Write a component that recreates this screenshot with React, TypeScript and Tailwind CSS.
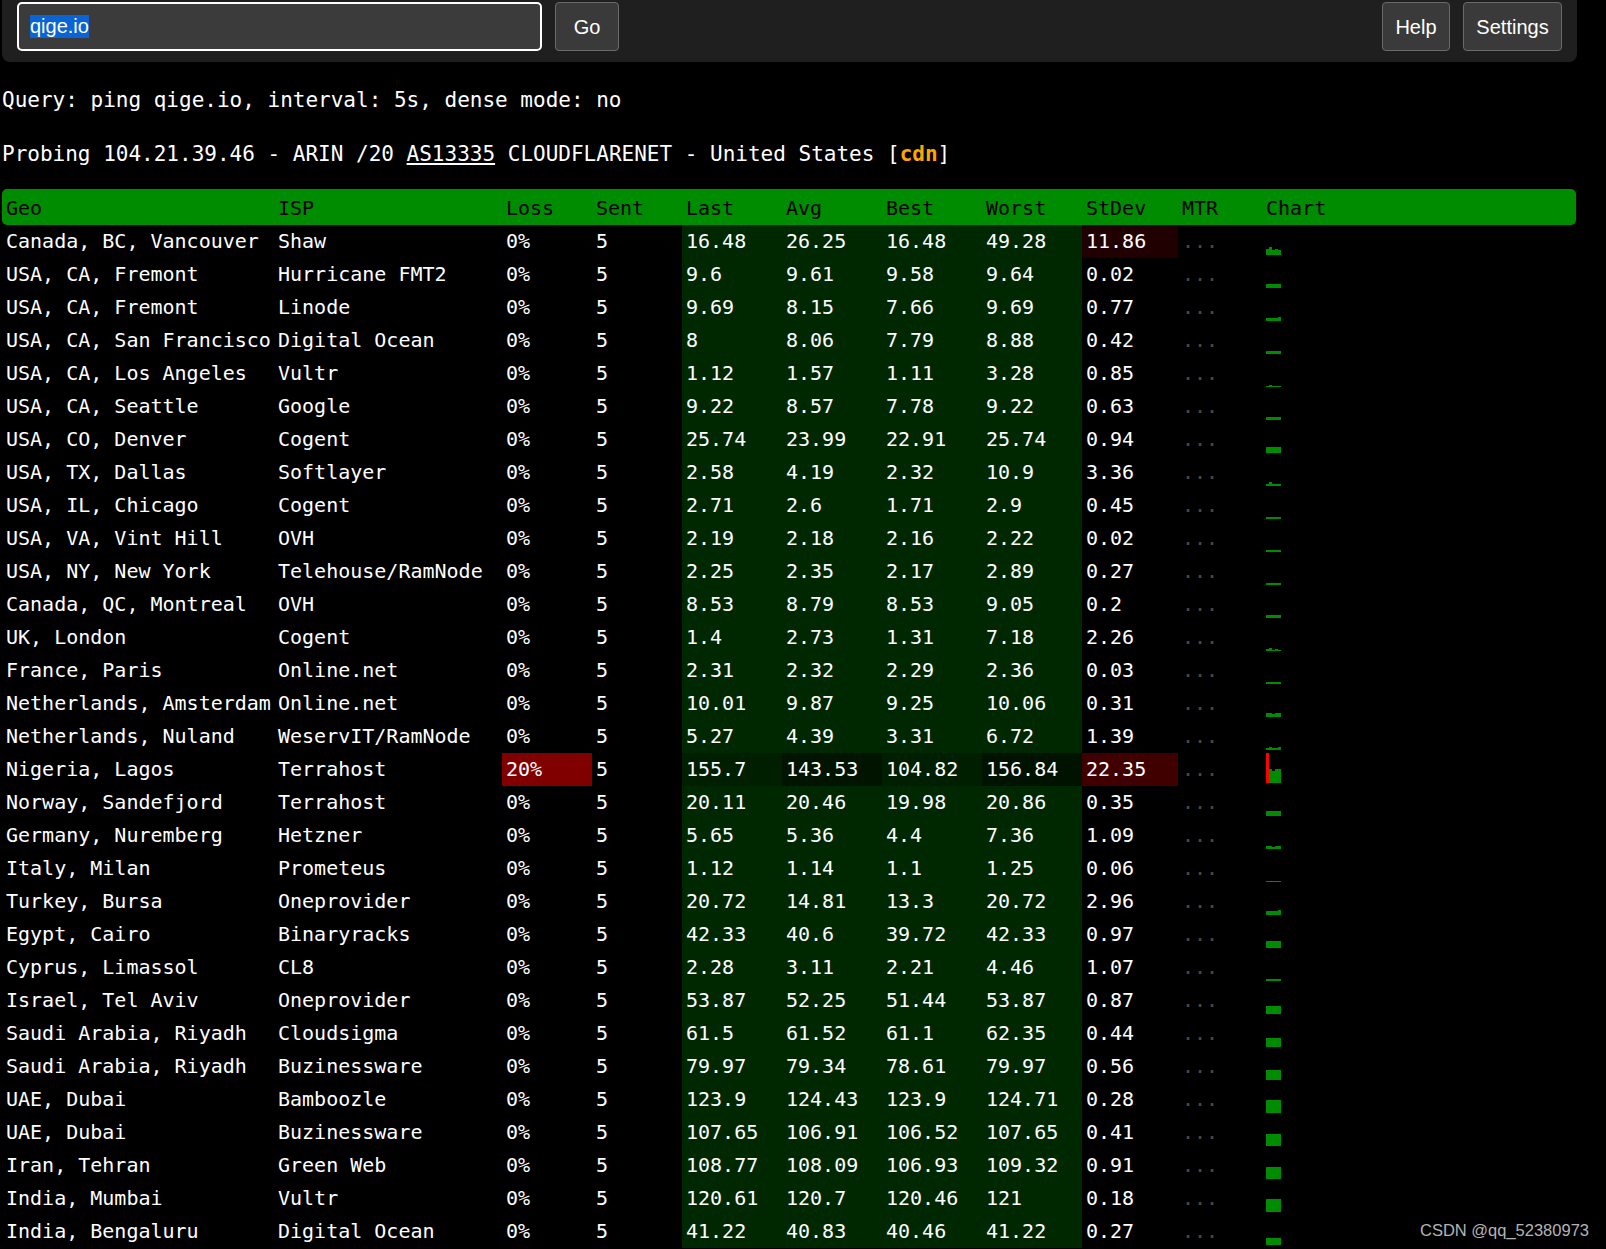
type Row = {
  geo: string
  isp: string
  loss: string
  last: number
  avg: number
  best: number
  worst: number
  stdev: string
  lost?: boolean
}

const rows: Row[] = [
  { geo: "Canada, BC, Vancouver", isp: "Shaw", loss: "0%", last: 16.48, avg: 26.25, best: 16.48, worst: 49.28, stdev: "11.86" },
  { geo: "USA, CA, Fremont", isp: "Hurricane FMT2", loss: "0%", last: 9.6, avg: 9.61, best: 9.58, worst: 9.64, stdev: "0.02" },
  { geo: "USA, CA, Fremont", isp: "Linode", loss: "0%", last: 9.69, avg: 8.15, best: 7.66, worst: 9.69, stdev: "0.77" },
  { geo: "USA, CA, San Francisco", isp: "Digital Ocean", loss: "0%", last: 8, avg: 8.06, best: 7.79, worst: 8.88, stdev: "0.42" },
  { geo: "USA, CA, Los Angeles", isp: "Vultr", loss: "0%", last: 1.12, avg: 1.57, best: 1.11, worst: 3.28, stdev: "0.85" },
  { geo: "USA, CA, Seattle", isp: "Google", loss: "0%", last: 9.22, avg: 8.57, best: 7.78, worst: 9.22, stdev: "0.63" },
  { geo: "USA, CO, Denver", isp: "Cogent", loss: "0%", last: 25.74, avg: 23.99, best: 22.91, worst: 25.74, stdev: "0.94" },
  { geo: "USA, TX, Dallas", isp: "Softlayer", loss: "0%", last: 2.58, avg: 4.19, best: 2.32, worst: 10.9, stdev: "3.36" },
  { geo: "USA, IL, Chicago", isp: "Cogent", loss: "0%", last: 2.71, avg: 2.6, best: 1.71, worst: 2.9, stdev: "0.45" },
  { geo: "USA, VA, Vint Hill", isp: "OVH", loss: "0%", last: 2.19, avg: 2.18, best: 2.16, worst: 2.22, stdev: "0.02" },
  { geo: "USA, NY, New York", isp: "Telehouse/RamNode", loss: "0%", last: 2.25, avg: 2.35, best: 2.17, worst: 2.89, stdev: "0.27" },
  { geo: "Canada, QC, Montreal", isp: "OVH", loss: "0%", last: 8.53, avg: 8.79, best: 8.53, worst: 9.05, stdev: "0.2" },
  { geo: "UK, London", isp: "Cogent", loss: "0%", last: 1.4, avg: 2.73, best: 1.31, worst: 7.18, stdev: "2.26" },
  { geo: "France, Paris", isp: "Online.net", loss: "0%", last: 2.31, avg: 2.32, best: 2.29, worst: 2.36, stdev: "0.03" },
  { geo: "Netherlands, Amsterdam", isp: "Online.net", loss: "0%", last: 10.01, avg: 9.87, best: 9.25, worst: 10.06, stdev: "0.31" },
  { geo: "Netherlands, Nuland", isp: "WeservIT/RamNode", loss: "0%", last: 5.27, avg: 4.39, best: 3.31, worst: 6.72, stdev: "1.39" },
  { geo: "Nigeria, Lagos", isp: "Terrahost", loss: "20%", last: 155.7, avg: 143.53, best: 104.82, worst: 156.84, stdev: "22.35", lost: true },
  { geo: "Norway, Sandefjord", isp: "Terrahost", loss: "0%", last: 20.11, avg: 20.46, best: 19.98, worst: 20.86, stdev: "0.35" },
  { geo: "Germany, Nuremberg", isp: "Hetzner", loss: "0%", last: 5.65, avg: 5.36, best: 4.4, worst: 7.36, stdev: "1.09" },
  { geo: "Italy, Milan", isp: "Prometeus", loss: "0%", last: 1.12, avg: 1.14, best: 1.1, worst: 1.25, stdev: "0.06" },
  { geo: "Turkey, Bursa", isp: "Oneprovider", loss: "0%", last: 20.72, avg: 14.81, best: 13.3, worst: 20.72, stdev: "2.96" },
  { geo: "Egypt, Cairo", isp: "Binaryracks", loss: "0%", last: 42.33, avg: 40.6, best: 39.72, worst: 42.33, stdev: "0.97" },
  { geo: "Cyprus, Limassol", isp: "CL8", loss: "0%", last: 2.28, avg: 3.11, best: 2.21, worst: 4.46, stdev: "1.07" },
  { geo: "Israel, Tel Aviv", isp: "Oneprovider", loss: "0%", last: 53.87, avg: 52.25, best: 51.44, worst: 53.87, stdev: "0.87" },
  { geo: "Saudi Arabia, Riyadh", isp: "Cloudsigma", loss: "0%", last: 61.5, avg: 61.52, best: 61.1, worst: 62.35, stdev: "0.44" },
  { geo: "Saudi Arabia, Riyadh", isp: "Buzinessware", loss: "0%", last: 79.97, avg: 79.34, best: 78.61, worst: 79.97, stdev: "0.56" },
  { geo: "UAE, Dubai", isp: "Bamboozle", loss: "0%", last: 123.9, avg: 124.43, best: 123.9, worst: 124.71, stdev: "0.28" },
  { geo: "UAE, Dubai", isp: "Buzinessware", loss: "0%", last: 107.65, avg: 106.91, best: 106.52, worst: 107.65, stdev: "0.41" },
  { geo: "Iran, Tehran", isp: "Green Web", loss: "0%", last: 108.77, avg: 108.09, best: 106.93, worst: 109.32, stdev: "0.91" },
  { geo: "India, Mumbai", isp: "Vultr", loss: "0%", last: 120.61, avg: 120.7, best: 120.46, worst: 121, stdev: "0.18" },
  { geo: "India, Bengaluru", isp: "Digital Ocean", loss: "0%", last: 41.22, avg: 40.83, best: 40.46, worst: 41.22, stdev: "0.27" },
]

const cols = "grid grid-cols-[272px_228px_90px_90px_100px_100px_100px_100px_96px_84px_1fr]"

function samples(r: Row): (number | null)[] {
  if (r.lost) return [null, r.worst, r.best, r.worst, r.last]
  if (r.worst === r.last) return [r.avg, r.best, r.avg, r.avg, r.last]
  return [r.avg, r.worst, r.best, r.avg, r.last]
}

function Chart({ row }: { row: Row }) {
  return (
    <svg width="15" height="30" viewBox="0 0 15 30" className="block">
      {samples(row).map((v, i) => {
        if (v === null) return <rect key={i} x={i * 3} y={0} width={3} height={30} fill="#ff0000" />
        const h = Math.max(1, Math.round(1.15 * Math.sqrt(v)))
        return <rect key={i} x={i * 3} y={30 - h} width={3} height={h} fill="#008c00" />
      })}
    </svg>
  )
}

const cell = "h-[33px] px-[4px] pb-[2px] flex items-center whitespace-nowrap"

export default function App() {
  return (
    <div className="relative min-h-screen bg-black text-white overflow-hidden">
      <div className="pl-[2px] w-[1577px]">
        <div className="flex items-start bg-[#1f1f1f] rounded-b-[8px] pl-[15px] pr-[15px] pt-[2px] pb-[11px] font-['Liberation_Sans',Arial,sans-serif] text-[20px]">
          <div className="w-[525px] h-[49px] border-2 border-white rounded-[5px] bg-[#3b3b3b] flex items-center pl-[11px]">
            <span className="bg-[#0a64d4] leading-[23px]">qige.io</span>
          </div>
          <button className="ml-[13px] w-[64px] h-[49px] bg-[#3a3a3a] border border-[#6a6a6a] rounded-[4px] text-white">Go</button>
          <div className="flex-1" />
          <button className="w-[68px] h-[49px] bg-[#3a3a3a] border border-[#6a6a6a] rounded-[4px] text-white">Help</button>
          <button className="ml-[13px] w-[99px] h-[49px] bg-[#3a3a3a] border border-[#6a6a6a] rounded-[4px] text-white">Settings</button>
        </div>
      </div>

      <div className="pl-[2px] font-['DejaVu_Sans_Mono','Liberation_Mono',monospace]">
        <div className="mt-[22px] h-[32px] leading-[32px] text-[21px]">Query: ping qige.io, interval: 5s, dense mode: no</div>
        <div className="mt-[22px] h-[32px] leading-[32px] text-[21px]">
          Probing 104.21.39.46 - ARIN /20 <span className="underline">AS13335</span> CLOUDFLARENET - United States [<span className="text-[#ffa500] font-bold">cdn</span>]
        </div>

        <div className="mt-[19px] w-[1574px] text-[20px]">
          <div className={`${cols} h-[36px] bg-[#008c00] rounded-[5px] text-black`}>
            {["Geo", "ISP", "Loss", "Sent", "Last", "Avg", "Best", "Worst", "StDev", "MTR", "Chart"].map((h) => (
              <div key={h} className="px-[4px] pt-[1px] flex items-center">{h}</div>
            ))}
          </div>
          {rows.map((r, i) => (
            <div key={i} className={cols}>
              <div className={cell}>{r.geo}</div>
              <div className={cell}>{r.isp}</div>
              <div className={`${cell} ${r.lost ? "bg-[#800000]" : ""}`}>{r.loss}</div>
              <div className={cell}>5</div>
              <div className={`${cell} ${r.lost ? "bg-[#001e00]" : "bg-[#002800]"}`}>{r.last}</div>
              <div className={`${cell} ${r.lost ? "bg-[#001400]" : "bg-[#002800]"}`}>{r.avg}</div>
              <div className={`${cell} ${r.lost ? "bg-[#001e00]" : "bg-[#002800]"}`}>{r.best}</div>
              <div className={`${cell} ${r.lost ? "bg-[#001200]" : "bg-[#002800]"}`}>{r.worst}</div>
              <div className={`${cell} ${r.lost ? "bg-[#400000]" : i === 0 ? "bg-[#200000]" : ""}`}>{r.stdev}</div>
              <div className={`${cell} text-[#4a4a4a]`}>...</div>
              <div className="h-[33px] px-[4px]">
                <Chart row={r} />
              </div>
            </div>
          ))}
        </div>
      </div>

      <div className="absolute right-[17px] bottom-[11px] leading-none text-[16.5px] text-[#b4b4b4] font-['Liberation_Sans',Arial,sans-serif]">
        CSDN @qq_52380973
      </div>
    </div>
  )
}
